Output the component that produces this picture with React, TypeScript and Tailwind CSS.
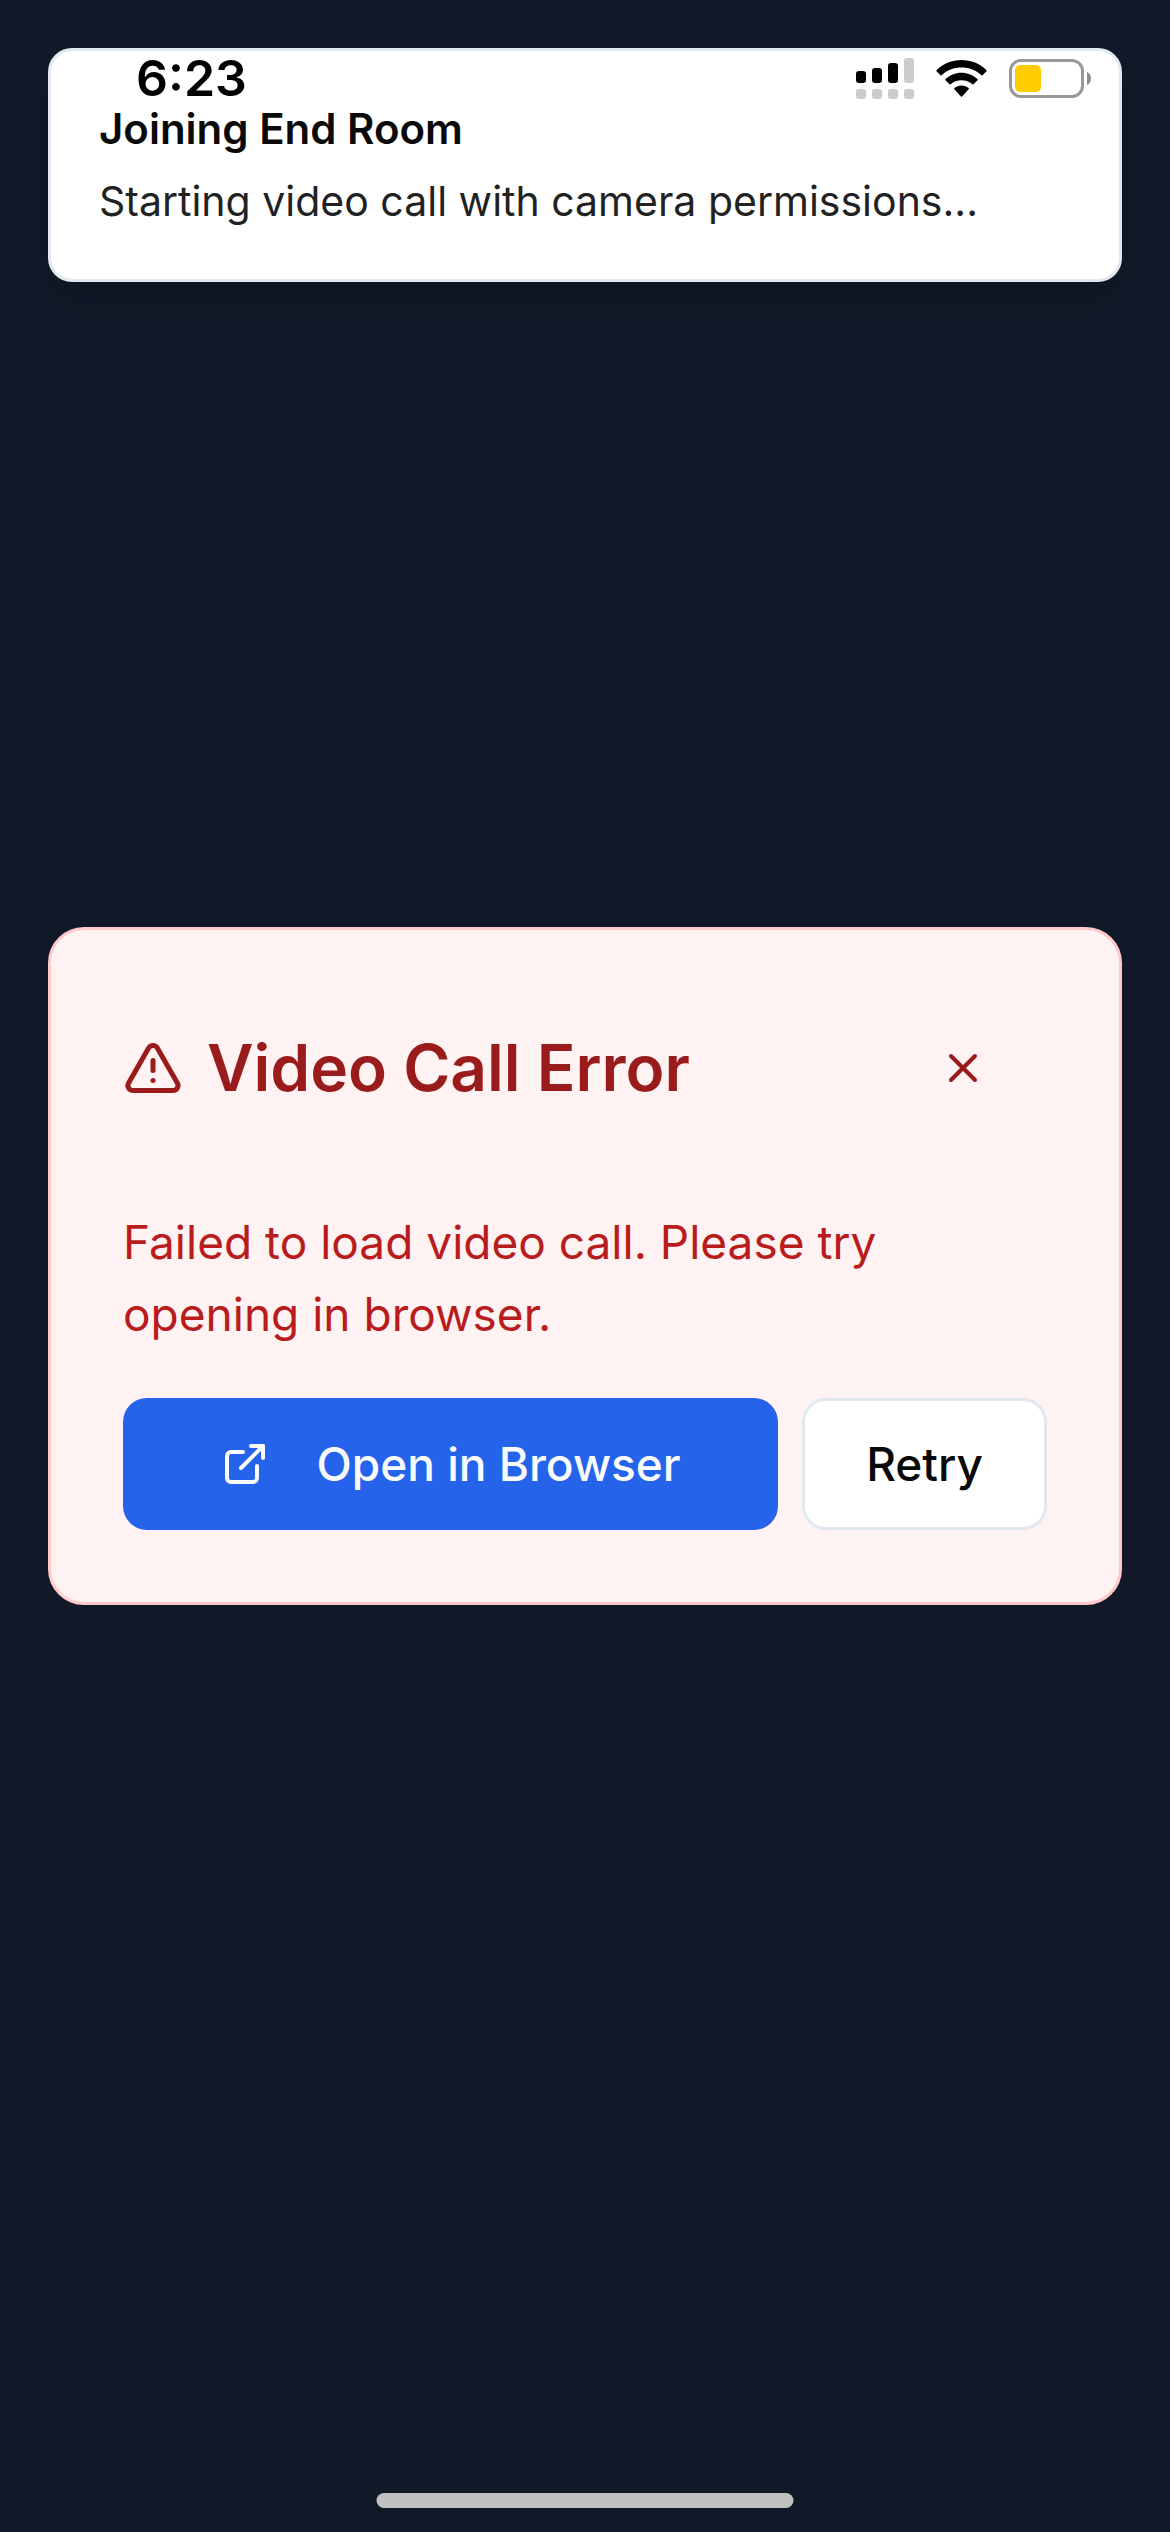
import { ExternalLink, TriangleAlert, X } from "lucide-react";

function SignalIcon() {
  return (
    <svg width="58" height="41" viewBox="0 0 58 41" aria-hidden="true">
      <rect x="0" y="13" width="10" height="12" rx="3" fill="#000" />
      <rect x="16" y="10" width="10" height="15" rx="3" fill="#000" />
      <rect x="32" y="5" width="10" height="20" rx="3" fill="#000" />
      <rect x="48" y="0" width="10" height="25" rx="3" fill="#ccc" />
      <rect x="0" y="31" width="10" height="10" rx="3" fill="#ccc" />
      <rect x="16" y="31" width="10" height="10" rx="3" fill="#ccc" />
      <rect x="32" y="31" width="10" height="10" rx="3" fill="#ccc" />
      <rect x="48" y="31" width="10" height="10" rx="3" fill="#ccc" />
    </svg>
  );
}

function WifiIcon() {
  return (
    <svg width="51" height="37" viewBox="0 0 51 37" aria-hidden="true">
      <path d="M25.500 0C35 0 43.800 3.600 50.500 10.200Q51 10.800 50.500 11.300L46.500 15.300Q46 15.800 45.400 15.300C40 10.200 33 7.600 25.500 7.600S11 10.200 5.600 15.300Q5 15.800 4.500 15.300L.5 11.300Q0 10.800.5 10.200C7.200 3.600 16 0 25.500 0Z" />
      <path d="M25.500 12.800C31.600 12.800 37.200 15.100 41.500 19.100Q42 19.700 41.500 20.300L37.500 24.300Q37 24.800 36.400 24.300C33.400 21.700 29.600 20.300 25.500 20.300S17.600 21.700 14.600 24.300Q14 24.800 13.500 24.300L9.500 20.300Q9 19.700 9.500 19.100C13.800 15.100 19.400 12.800 25.500 12.800Z" />
      <path d="M25.500 25.500C28.200 25.500 30.700 26.400 32.600 28.100Q33.200 28.700 32.600 29.300L26.100 36.400Q25.500 37 24.900 36.400L18.400 29.300Q17.800 28.700 18.400 28.100C20.300 26.400 22.800 25.500 25.500 25.500Z" />
    </svg>
  );
}

function BatteryIcon() {
  return (
    <svg width="82" height="39" viewBox="0 0 82 39" aria-hidden="true">
      <rect x="1.500" y="1.500" width="72" height="36" rx="10.500" fill="none" stroke="#999" strokeWidth="3" />
      <rect x="6" y="6" width="26" height="27" rx="5" fill="#fc0" />
      <path d="M78 13C80.500 14 82 16.500 82 19.500S80.500 25 78 26Z" fill="#8c8c8c" />
    </svg>
  );
}

function StatusBar() {
  return (
    <header className="absolute inset-x-0 top-0 z-20 flex items-center justify-between pt-[48px] pr-[79px] pl-[136px] text-black">
      <time className="text-[50px] leading-[60px] font-semibold">6:23</time>
      <div className="flex items-center gap-[22px]">
        <SignalIcon />
        <WifiIcon />
        <BatteryIcon />
      </div>
    </header>
  );
}

function Toast() {
  return (
    <div
      role="status"
      className="absolute inset-x-[48px] top-[48px] z-10 flex flex-col gap-[12px] rounded-[24px] border-[3px] border-slate-200 bg-white p-[48px] leading-[60px] text-[#0a0a0a] shadow-[0_30px_45px_-9px_rgba(0,0,0,0.1),0_12px_18px_-12px_rgba(0,0,0,0.1)]"
    >
      <div className="text-[42px] font-semibold">Joining End Room</div>
      <div className="text-[41px] opacity-90">Starting video call with camera permissions...</div>
    </div>
  );
}

function ErrorCard() {
  return (
    <section
      aria-labelledby="error-title"
      className="w-full rounded-[36px] border-[3px] border-[#ffc9c9] bg-[#fef2f2] text-[46px] leading-[72px]"
    >
      <div className="flex items-center justify-between p-[72px] text-[#991b1b]">
        <div className="flex items-center gap-[24px]">
          <TriangleAlert size={60} aria-hidden="true" />
          <h1 id="error-title" className="text-[64px] font-semibold">
            Video Call Error
          </h1>
        </div>
        <button type="button" aria-label="Close" className="flex h-[132px] items-center px-[60px]">
          <X size={48} aria-hidden="true" />
        </button>
      </div>
      <div className="flex flex-col gap-[48px] px-[72px] pb-[72px]">
        <p className="text-[#b91c1c]">Failed to load video call. Please try opening in browser.</p>
        <div className="flex gap-[24px] font-medium">
          <button
            type="button"
            className="flex h-[132px] flex-1 items-center justify-center gap-[48px] rounded-[24px] bg-[#2563eb] text-slate-50"
          >
            <ExternalLink size={48} aria-hidden="true" />
            Open in Browser
          </button>
          <button
            type="button"
            className="h-[132px] rounded-[24px] border-[3px] border-slate-200 bg-white px-[61px] text-[#0a0a0a]"
          >
            Retry
          </button>
        </div>
      </div>
    </section>
  );
}

export default function App() {
  return (
    <div className="relative flex min-h-screen flex-col bg-[#111827] font-['Inter',sans-serif]">
      <StatusBar />
      <Toast />
      <main className="flex flex-1 items-center justify-center px-[48px]">
        <ErrorCard />
      </main>
      <div className="absolute bottom-[24px] left-1/2 h-[15px] w-[417px] -translate-x-1/2 rounded-full bg-[#c1c1c1]" />
    </div>
  );
}
